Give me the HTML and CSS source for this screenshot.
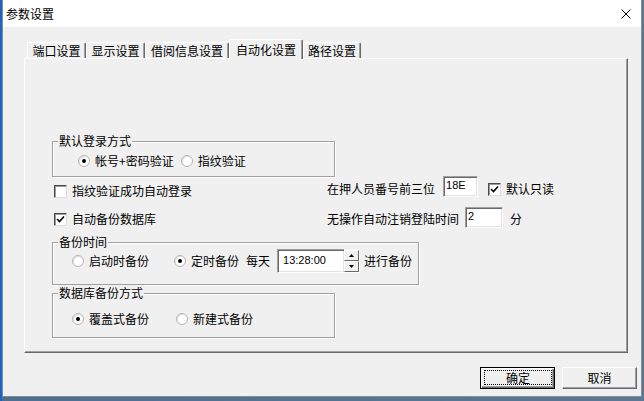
FILE: index.html
```html
<!DOCTYPE html>
<html lang="zh-CN">
<head>
  <meta charset="UTF-8" />
  <title>参数设置</title>
  <link rel="stylesheet" href="styles.css">
</head>
<body>
  <div class="window">
    <div class="titlebar">
      <span class="title">参数设置</span>
      <svg class="close" width="10" height="10" viewBox="0 0 10 10">
        <path d="M0.5 0.5 L9.5 9.5 M9.5 0.5 L0.5 9.5" stroke="#000" stroke-width="1" fill="none"/>
      </svg>
    </div>

    <div class="body">
      <div class="tabs">
        <div class="tab w1">端口设置</div>
        <div class="tab w2">显示设置</div>
        <div class="tab w3">借阅信息设置</div>
        <div class="tab active w4">自动化设置</div>
        <div class="tab w5">路径设置</div>
      </div>

      <div class="panel">
        <!-- 默认登录方式 -->
        <div class="group g-login">
          <span class="legend">默认登录方式</span>
          <div class="opts">
            <label class="radio on"><i></i>帐号+密码验证</label>
            <label class="radio r-finger"><i></i>指纹验证</label>
          </div>
        </div>

        <div class="row row-b">
          <div class="cell-left">
            <label class="check"><i></i>指纹验证成功自动登录</label>
          </div>
          <span class="lbl">在押人员番号前三位</span>
          <input class="field f-prefix" type="text" value="18E">
          <label class="check on c-readonly"><i><svg width="9" height="9" viewBox="0 0 9 9"><path d="M1 4 L3.5 6.5 L8 1.5" stroke="#000" stroke-width="1.6" fill="none"/></svg></i>默认只读</label>
        </div>

        <div class="row row-c">
          <div class="cell-left">
            <label class="check on"><i><svg width="9" height="9" viewBox="0 0 9 9"><path d="M1 4 L3.5 6.5 L8 1.5" stroke="#000" stroke-width="1.6" fill="none"/></svg></i>自动备份数据库</label>
          </div>
          <span class="lbl">无操作自动注销登陆时间</span>
          <input class="field f-minutes" type="text" value="2">
          <span class="lbl unit">分</span>
        </div>

        <!-- 备份时间 -->
        <div class="group g-time">
          <span class="legend">备份时间</span>
          <div class="opts">
            <label class="radio"><i></i>启动时备份</label>
            <label class="radio on r-timed"><i></i>定时备份</label>
            <span class="lbl daily">每天</span>
            <div class="spinner">
              <input class="field f-time" type="text" value="13:28:00">
              <div class="spin">
                <span class="up"><svg width="5" height="3" viewBox="0 0 5 3"><path d="M2.5 0 L5 3 L0 3 Z" fill="#000"/></svg></span>
                <span class="down"><svg width="5" height="3" viewBox="0 0 5 3"><path d="M0 0 L5 0 L2.5 3 Z" fill="#000"/></svg></span>
              </div>
            </div>
            <span class="lbl after">进行备份</span>
          </div>
        </div>

        <!-- 数据库备份方式 -->
        <div class="group g-mode">
          <span class="legend">数据库备份方式</span>
          <div class="opts">
            <label class="radio on"><i></i>覆盖式备份</label>
            <label class="radio r-new"><i></i>新建式备份</label>
          </div>
        </div>
      </div>

      <div class="buttons">
        <button class="btn default"><span>确定</span></button>
        <button class="btn">取消</button>
      </div>
    </div>
  </div>
</body>
</html>
```

FILE: styles.css
```css
:root {
  --face: #f0f0f0;
  --shadow: #a0a0a0;
  --dark: #696969;
  --light: #ffffff;
  --text: #000000;
}

* {
  margin: 0;
  padding: 0;
  box-sizing: border-box;
}

body {
  width: 644px;
  height: 401px;
  overflow: hidden;
  font-family: "Noto Sans CJK SC", "Microsoft YaHei", sans-serif;
  font-size: 12px;
  line-height: 16px;
  color: var(--text);
  background: linear-gradient(90deg, #1a66c2 0, #1a66c2 2px, #4d6f90 2px, #5a7894 100%);
}

.window {
  margin-left: 2px;
  width: 640px;
  height: 397px;
  background: var(--face);
  border: 1px solid #8c8c8c;
  border-top: none;
  display: flex;
  flex-direction: column;
}

/* title bar */
.titlebar {
  height: 27px;
  background: #fff;
  display: flex;
  align-items: center;
  justify-content: space-between;
  padding: 0 10px 0 3px;
}

.title {
  font-size: 12px;
  line-height: 27px;
}

.close {
  display: block;
}

.body {
  padding: 0 4px 0 21px;
}

/* tabs */
.tabs {
  margin-top: 12px;
  height: 19px;
  padding-left: 3px;
  display: flex;
  align-items: flex-end;
}

.tab {
  height: 16px;
  line-height: 15px;
  text-align: center;
  background: var(--face);
  border-top: 1px solid var(--light);
  border-left: 1px solid var(--light);
  border-right: 1px solid var(--dark);
  box-shadow: inset -1px 0 0 var(--shadow);
  border-radius: 2px 2px 0 0;
}

.tab.active {
  position: relative;
  z-index: 1;
  height: 20px;
  margin-bottom: -1px;
  padding-top: 2px;
}

.w1 { width: 59px; }
.w2 { width: 59px; }
.w3 { width: 84px; }
.w4 { width: 74px; }
.w5 { width: 58px; }

/* tab page */
.panel {
  margin-right: 9px;
  height: 295px;
  padding: 82px 0 0 27px;
  border-top: 1px solid var(--light);
  border-left: 1px solid var(--light);
  border-right: 1px solid var(--dark);
  border-bottom: 1px solid var(--dark);
  box-shadow: inset -1px -1px 0 var(--shadow);
}

.group {
  position: relative;
  border: 1px solid var(--shadow);
  box-shadow: 1px 1px 0 var(--light), inset 1px 1px 0 var(--light);
}

.legend {
  position: absolute;
  top: -9px;
  left: 5px;
  padding: 0 1px;
  background: var(--face);
}

.opts {
  display: flex;
  align-items: center;
}

.g-login {
  width: 283px;
  padding: 11px 0 7px 25px;
}

.g-time {
  width: 367px;
  margin-top: 14px;
  padding: 6px 0 11px 19px;
}

.g-time .opts {
  height: 24px;
}

.g-mode {
  width: 283px;
  margin-top: 8px;
  padding: 17px 0 10px 19px;
}

/* radio buttons */
.radio {
  display: flex;
  align-items: center;
  white-space: nowrap;
}

.radio i {
  width: 12px;
  height: 12px;
  margin-right: 5px;
  border-radius: 50%;
  background: #fff;
  border: 1px solid #b4b4b4;
  box-shadow: inset 1px 1px 0 #e3e3e3;
  display: flex;
  align-items: center;
  justify-content: center;
}

.radio.on i::after {
  content: "";
  width: 4px;
  height: 4px;
  border-radius: 50%;
  background: #000;
}

.r-finger { margin-left: 7px; }
.r-timed { margin-left: 25px; }
.r-new { margin-left: 27px; }
.daily { margin-left: 7px; }
.after { margin-left: 4px; }

/* checkbox */
.check {
  display: flex;
  align-items: center;
  white-space: nowrap;
}

.check i {
  width: 13px;
  height: 13px;
  margin-right: 5px;
  background: #fff;
  border: 1px solid;
  border-color: #4a4a4a #dcdcdc #dcdcdc #4a4a4a;
  box-shadow: inset 1px 1px 0 #9a9a9a;
  display: flex;
  align-items: center;
  justify-content: center;
}

.check i svg {
  display: block;
}

/* rows between groups */
.row {
  display: flex;
  align-items: flex-start;
}

.cell-left {
  width: 275px;
  padding-left: 2px;
}

.row-b {
  height: 23px;
  margin-top: -1px;
}

.row-b .cell-left { margin-top: 7px; }
.row-b .lbl { margin-top: 5px; }
.row-b .c-readonly { margin: 5px 0 0 10px; }

.row-c {
  height: 29px;
}

.row-c .cell-left { margin-top: 12px; }
.row-c .lbl { margin-top: 12px; }
.row-c .f-minutes { margin-top: 8px; }
.row-c .unit { margin-left: 7px; }

/* text fields */
.field {
  height: 21px;
  background: #fff;
  border: 1px solid;
  border-color: var(--shadow) var(--light) var(--light) var(--shadow);
  box-shadow: inset 1px 1px 0 var(--dark), inset -1px -1px 0 #e3e3e3;
  font-family: "Liberation Sans", Arial, sans-serif;
  font-size: 11px;
  line-height: 13px;
  padding: 0 2px 4px;
  color: #000;
  outline: none;
}

.f-prefix {
  width: 35px;
  margin-left: 8px;
}

.f-minutes {
  width: 38px;
  margin-left: 6px;
}

.spinner {
  margin-left: 7px;
  display: flex;
}

.f-time {
  width: 67px;
  height: 24px;
  padding: 0 5px 2px;
  border-right: none;
}

.spin {
  width: 16px;
  height: 24px;
  display: flex;
  flex-direction: column;
  background: #fff;
  border-bottom: 1px solid var(--light);
  padding: 1px 1px 0 0;
}

.spin span {
  flex: 1;
  display: flex;
  align-items: center;
  justify-content: center;
  background: var(--face);
  border: 1px solid;
  border-color: var(--light) var(--dark) var(--dark) var(--light);
}

.spin svg {
  display: block;
}

/* dialog buttons */
.buttons {
  margin-top: 14px;
  display: flex;
  justify-content: flex-end;
  gap: 7px;
}

.btn {
  width: 75px;
  height: 22px;
  font-family: inherit;
  font-size: 12px;
  line-height: 16px;
  color: #000;
  background: var(--face);
  border: 1px solid;
  border-color: var(--light) var(--dark) var(--dark) var(--light);
  box-shadow: inset -1px -1px 0 var(--shadow);
  display: flex;
  align-items: center;
  justify-content: center;
}

.btn.default {
  border: 1px solid #000;
  box-shadow: inset 1px 1px 0 var(--light), inset -1px -1px 0 var(--dark), inset -2px -2px 0 var(--shadow);
  padding: 2px 2px 3px 3px;
}

.btn.default span {
  width: 100%;
  height: 100%;
  border: 1px dotted #000;
  display: flex;
  align-items: center;
  justify-content: center;
}
```
